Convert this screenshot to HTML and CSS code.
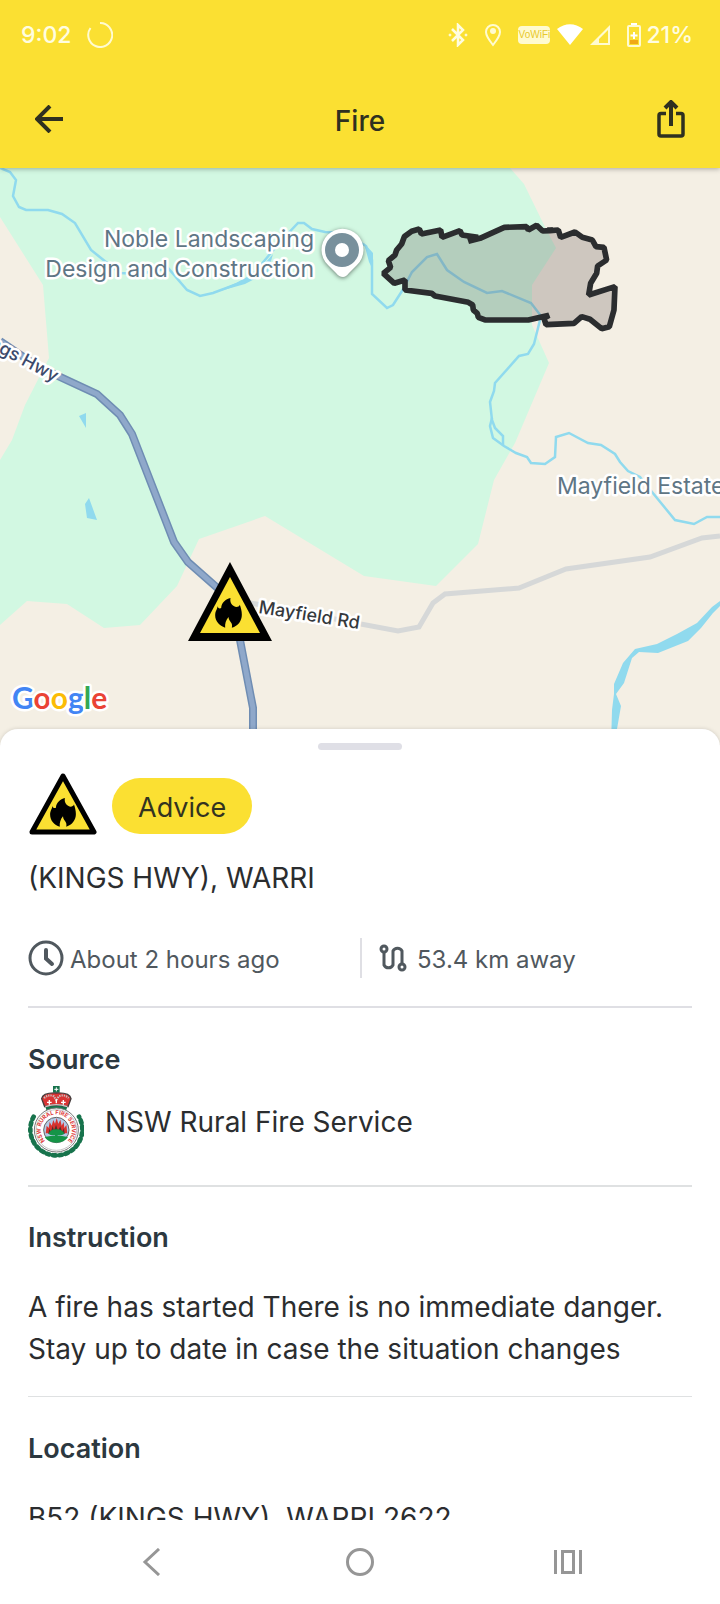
FILE: index.html
```html
<!DOCTYPE html>
<html lang="en">

<head>
    <meta charset="UTF-8">
    <meta name="viewport" content="width=device-width, initial-scale=1.0">
    <title>Fire</title>
    <link rel="stylesheet" href="styles.css">
</head>

<body>
    <!-- shared shapes -->
    <svg class="defs" width="0" height="0" aria-hidden="true">
        <symbol id="flame" viewBox="0 0 80 90">
            <path d="M46 0C31 4 19 14 18 30C13 33 8 30 7 24C7 34 0 38 0 52C0 70 13 84 30 89C29 78 32 66 40 57C40 66 46 70 49 76C51 80 51 85 50 89C69 84 80 68 80 50C80 39 77 28 74 20C72 26 64 29 57 25C47 20 44 9 46 0Z"/>
        </symbol>
    </svg>

    <div class="screen">
        <header class="header">
            <div class="status-bar">
                <div class="status-left">
                    <span>9:02</span>
                    <svg width="26" height="26" viewBox="0 0 26 26" fill="none" stroke="#fffbd0" stroke-width="2">
                        <path d="M13 1a12 12 0 1 1-9.500 5"/>
                    </svg>
                </div>
                <div class="status-right">
                    <svg width="20" height="24" viewBox="0 0 20 24" fill="none" stroke="#fffde0" stroke-width="2.500">
                        <path d="M4 6L15 17L10 22V2L15 7L4 18"/>
                        <circle cx="2" cy="12" r="1" fill="#fffbd0" stroke-width="1"/>
                        <circle cx="18" cy="12" r="1" fill="#fffbd0" stroke-width="1"/>
                    </svg>
                    <svg width="16" height="24" viewBox="0 0 16 24" fill="none" stroke="#fffbd0" stroke-width="2">
                        <path d="M8 22C4 17 1 13 1 9a7 7 0 0 1 14 0c0 4-3 8-7 13Z"/>
                        <circle cx="8" cy="8" r="3" fill="#fffbd0" stroke="none"/>
                    </svg>
                    <div class="signals">
                        <span class="vowifi">VoWiFi</span>
                        <svg width="26" height="22" viewBox="0 0 26 22"><path fill="#fff" d="M0 5C8-1.500 18-1.500 26 5L13 21Z"/></svg>
                        <svg width="20" height="22" viewBox="0 0 20 22"><path fill="#fffbd0" fill-rule="evenodd" d="M20 1V21H0ZM18 6L9 15V19H18Z"/></svg>
                    </div>
                    <div class="battery">
                        <svg width="14" height="24" viewBox="0 0 14 24">
                            <path fill="#fff" d="M4 0h6v2H4z"/>
                            <rect x="1" y="3" width="12" height="20" rx="1" fill="none" stroke="#fffbd0" stroke-width="2"/>
                            <path d="M7 9v7M3.500 12.500h7" stroke="#fff" stroke-width="2"/>
                            <path fill="#f0a818" d="M3 17h8v4H3z"/>
                        </svg>
                        <span>21%</span>
                    </div>
                </div>
            </div>
            <div class="app-bar">
                <button class="icon-btn" type="button" aria-label="Back">
                    <svg width="28" height="28" viewBox="0 0 28 28" fill="none" stroke="#2f3020" stroke-width="4">
                        <path d="M28 14H3M15 1L2 14L15 27"/>
                    </svg>
                </button>
                <h1>Fire</h1>
                <button class="icon-btn" type="button" aria-label="Share">
                    <svg width="28" height="38" viewBox="0 0 28 38" fill="none" stroke="#2f3020" stroke-width="3.500">
                        <path d="M9 13.500H4Q2 13.500 2 15.500V34Q2 36 4 36H24Q26 36 26 34V15.500Q26 13.500 24 13.500H19"/>
                        <path d="M14 26V2M8 8L14 2L20 8" stroke-width="4"/>
                    </svg>
                </button>
            </div>
        </header>

        <main class="content">
            <div class="map">
                <svg class="map-canvas" viewBox="0 168 720 577" preserveAspectRatio="xMidYMin slice">
                    <path class="forest" d="M0 168H510L524 184L545 227L556 248L532 285V325L549 363L515 443L494 480L478 544L436 586L364 576L265 516L199 539L177 586L140 625L104 628L67 604L27 601L0 625V460L12 440L25 405L49 358L43 285L0 217Z"/>

                    <!-- creeks and dams -->
                    <g class="creek">
                        <path d="M0 168L10 172L16 180L13 196L19 207L26 210H48L62 214L75 223L91 250L106 262L120 273L140 274L168 268L187 290L200 296L213 293L248 280L265 260L280 242L298 223H304L312 229L325 232L345 233L366 246L372 260V294L387 308L393 305L402 291L412 272L427 257L437 254L447 270L464 282L487 293L502 291L531 303L541 316L534 344L528 354L519 356L495 383L494 391L490 402L492 420L495 428L503 436V445"/>
                        <path d="M492 418L490 426L493 438L504 446L516 453L527 457L531 463L545 464L555 457L556 437L569 433L588 443L601 445L615 454L620 462L628 471L640 477L652 492L675 520L694 524L707 517H720"/>
                    </g>
                    <path class="water" d="M213 293L236 283L258 271L273 254L268 272L245 284ZM364 243L373 253V270L369 262ZM79 416L86 413V428ZM85 504L89 498L93 509L97 520L87 518Z"/>
                    <path class="water" d="M720 601L712 607L697 623L677 634L657 644L635 649L623 663L614 684V694L612 710L611 745H617V729L621 706L616 694L624 683L632 658L639 652L658 653L688 641L701 628L713 613L720 606Z"/>

                    <!-- roads -->
                    <path class="road" d="M245 602L300 612L350 622L398 631L419 627L433 603L445 594L519 588L566 569L650 557L702 538L720 536"/>
                    <path class="highway-edge" d="M0 341L28 360L60 377L97 394L120 415L132 434L174 542L188 562L222 592L240 640L253 708V745"/>
                    <path class="highway" d="M0 341L28 360L60 377L97 394L120 415L132 434L174 542L188 562L222 592L240 640L253 708V745"/>

                    <!-- burnt area, drawn at three times map scale -->
                    <path class="burn-area" transform="translate(350 160) scale(0.3333)" d="M163 230L185 214L208 207L214 222L272 210L276 232L330 212L336 225L384 232L355 244L390 235L463 202L530 200L535 210L560 196L578 213L600 212V202V212L625 210L632 232L675 216L697 232L727 240L738 260L762 262L770 300L743 318L740 340L722 370L716 405L795 380L792 450L778 500L755 506L720 478L695 470L672 490L588 494L582 475L597 466L535 480H405L385 472L382 460L370 450L368 435L355 427L255 408L245 400L165 390V360L133 370L100 340L122 322L115 302L135 285L140 270L155 252Z"/>

                    <!-- labels -->
                    <g class="place" text-anchor="end">
                        <text x="314" y="247">Noble Landscaping</text>
                        <text x="314" y="277">Design and Construction</text>
                    </g>
                    <text class="place" x="557" y="494">Mayfield Estate</text>
                    <text class="road-name highway-name" transform="translate(-27 339) rotate(28)">Kings Hwy</text>
                    <text class="road-name" transform="translate(258 613) rotate(9)">Mayfield Rd</text>

                    <!-- place pin -->
                    <path class="pin" d="M343 277Q339 277 336 273L328 265A21 21 0 1 1 357 265L349 273Q346 277 343 277Z"/>
                    <circle cx="342" cy="250" r="17" fill="#78909c"/>
                    <circle cx="342" cy="250" r="7" fill="#fff"/>

                    <!-- fire marker -->
                    <path d="M230 562L272 641H188Z"/>
                    <path d="M230 577L260 633H200Z" fill="#fbe032"/>
                    <use href="#flame" x="215" y="598" width="27" height="30"/>

                    <text class="logo" x="12" y="709"><tspan fill="#4285f4">G</tspan><tspan fill="#ea4335">o</tspan><tspan fill="#fbbc05">o</tspan><tspan fill="#4285f4">g</tspan><tspan fill="#34a853">l</tspan><tspan fill="#ea4335">e</tspan></text>
                </svg>
            </div>

            <div class="sheet">
                <div class="handle"></div>

                <div class="warning">
                    <svg width="70" height="64" viewBox="0 0 70 64">
                        <path d="M35 4L66 60H4Z" fill="#fbe032" stroke="#000" stroke-width="5" stroke-linejoin="round"/>
                        <use href="#flame" x="22" y="26" width="26" height="29"/>
                    </svg>
                    <span class="badge">Advice</span>
                </div>
                <h2 class="title">(KINGS HWY), WARRI</h2>

                <div class="meta">
                    <div class="meta-item">
                        <svg width="36" height="36" viewBox="0 0 36 36" fill="none" stroke="#50585e" stroke-width="3">
                            <circle cx="18" cy="18" r="16"/>
                            <path d="M18 10V18.500L24 24" stroke-width="4" stroke-linecap="round"/>
                        </svg>
                        <span>About 2 hours ago</span>
                    </div>
                    <div class="meta-item distance">
                        <svg width="28" height="28" viewBox="0 0 28 28" fill="none" stroke="#50585e" stroke-width="3">
                            <path d="M5 8V21a5 5 0 0 0 9 0V7a5 5 0 0 1 9 0V20"/>
                            <circle cx="5" cy="5" r="3"/>
                            <circle cx="23" cy="23" r="3"/>
                        </svg>
                        <span>53.4 km away</span>
                    </div>
                </div>

                <section class="source">
                    <h3>Source</h3>
                    <div class="source-row">
                        <svg width="56" height="72" viewBox="0 0 168 216">
                            <defs>
                                <path id="ring" d="M85 179A47 47 0 0 1 85 85A47 47 0 0 1 85 179"/>
                            </defs>
                            <!-- wreath -->
                            <g fill="none" stroke="#17734c">
                                <path d="M17 92A78 78 0 1 0 153 92" stroke-width="4"/>
                                <path d="M17 92A78 78 0 1 0 153 92" stroke-width="14" stroke-linecap="round" stroke-dasharray="8 11"/>
                                <path d="M54 68Q85 58 116 68" stroke-width="11"/>
                            </g>
                            <!-- crown -->
                            <path d="M75 0h20v20H75z" fill="#17734c"/>
                            <path d="M85 4v12M79 10h12" stroke="#fff" stroke-width="3"/>
                            <path d="M50 62L41 38C43 26 60 20 85 21C110 20 127 26 129 38L120 62Q85 52 50 62Z" fill="#d93535" stroke="#433c3c" stroke-width="4"/>
                            <path d="M48 36Q62 24 78 31L85 44L92 31Q108 24 122 36" fill="none" stroke="#c9c4c2" stroke-width="6" stroke-dasharray="4 3"/>
                            <path d="M64 42v14M57 49h14M106 42v14M99 49h14M85 40v12" stroke="#fff" stroke-width="4"/>
                            <path d="M52 62Q85 50 118 62" fill="none" stroke="#d0c8c8" stroke-width="4"/>
                            <circle cx="85" cy="132" r="66" fill="#fff" stroke="#777" stroke-width="3"/>
                            <circle cx="85" cy="132" r="61" fill="none" stroke="#aaa" stroke-width="2"/>
                            <text class="crest-text" text-anchor="middle"><textPath href="#ring" startOffset="50%">NSW RURAL FIRE SERVICE</textPath></text>
                            <circle cx="85" cy="132" r="38" fill="#b4c9e6" stroke="#666" stroke-width="3"/>
                            <path d="M53 142L56 119L62 126L65 108L71 119L76 102L81 113L86 96L91 113L97 101L101 119L107 108L109 126L115 117L118 142Z" fill="#d8332f"/>
                            <path d="M61 144L64 128L69 137L74 120L78 134L84 116L90 134L97 121L102 137L108 127L110 144Z" fill="#52302b"/>
                            <path d="M50 153Q85 144 120 153Q110 170 85 170Q60 170 50 153Z" fill="#159447"/>
                            <path d="M62 144Q65 130 85 130Q105 130 109 144Q99 150 89 147V160H81V147Q70 150 62 144Z" fill="#159447"/>
                        </svg>
                        <span>NSW Rural Fire Service</span>
                    </div>
                </section>

                <section class="instruction">
                    <h3>Instruction</h3>
                    <p>A fire has started There is no immediate danger.<br>Stay up to date in case the situation changes</p>
                </section>

                <section class="location">
                    <h3>Location</h3>
                    <p>B52 (KINGS HWY), WARRI 2622</p>
                </section>
            </div>
        </main>

        <nav class="nav-bar">
            <button type="button" aria-label="Back">
                <svg width="28" height="28" viewBox="0 0 28 28"><path d="M21 1L7 14L21 27"/></svg>
            </button>
            <button type="button" aria-label="Home">
                <svg width="28" height="28" viewBox="0 0 28 28"><circle cx="14" cy="14" r="12.500"/></svg>
            </button>
            <button type="button" aria-label="Recent apps">
                <svg width="28" height="28" viewBox="0 0 28 28"><path d="M1.500 2V26M26.500 2V26M8.500 3.500H19.500V24.500H8.500Z"/></svg>
            </button>
        </nav>
    </div>
</body>

</html>
```

FILE: styles.css
```css
* {
    margin: 0;
    padding: 0;
    box-sizing: border-box;
}

body {
    font-family: Inter, "Liberation Sans", sans-serif;
    color: #2b2d2f;
    background-color: #fff;
}

svg {
    display: block;
    flex-shrink: 0;
}

button {
    border: none;
    background: none;
    cursor: pointer;
}

.defs {
    position: absolute;
}

.screen {
    display: flex;
    flex-direction: column;
    height: 100vh;
    overflow: hidden;
}

/* header */
.header {
    position: relative;
    z-index: 1;
    background-color: #fbe032;
    box-shadow: 0 1px 5px rgba(0, 0, 0, 0.3);
}

.status-bar {
    display: flex;
    justify-content: space-between;
    align-items: center;
    height: 70px;
    padding: 0 27px 0 21px;
    color: #fffde0;
    font-size: 23px;
    font-weight: 500;
}

.status-left,
.status-right,
.signals,
.battery {
    display: flex;
    align-items: center;
}

.status-left {
    gap: 16px;
}

.status-right {
    gap: 17px;
}

.signals {
    gap: 7px;
}

.battery {
    gap: 5px;
}

.vowifi {
    width: 32px;
    border-radius: 4px;
    background-color: #fffbd0;
    color: #e8c92c;
    font-family: "Liberation Sans", sans-serif;
    font-size: 10px;
    line-height: 18px;
    text-align: center;
}

.app-bar {
    display: flex;
    justify-content: space-between;
    align-items: center;
    height: 98px;
    padding: 0 30px;
}

.app-bar h1 {
    padding-top: 4px;
    font-size: 28px;
    font-weight: 500;
    color: #2f3020;
}

.icon-btn {
    display: flex;
    justify-content: center;
    width: 38px;
}

/* map */
.content {
    flex: 1;
    min-height: 0;
    overflow: hidden;
}

.map {
    height: 577px;
    background-color: #f4efe4;
}

.map-canvas {
    width: 100%;
    height: 100%;
}

.forest {
    fill: #d2f8e2;
}

.creek {
    fill: none;
    stroke: #90daee;
    stroke-width: 2.5;
}

.water {
    fill: #90daee;
}

.road {
    fill: none;
    stroke: #d6d8d8;
    stroke-width: 5;
}

.highway-edge {
    fill: none;
    stroke: #6f8db3;
    stroke-width: 8;
}

.highway {
    fill: none;
    stroke: #8fa8ca;
    stroke-width: 5;
}

.burn-area {
    fill: rgba(90, 80, 80, 0.25);
    stroke: #2b2d2f;
    stroke-width: 17;
    stroke-linejoin: bevel;
}

.place,
.road-name,
.logo {
    paint-order: stroke;
    stroke: #fff;
    stroke-width: 5;
    stroke-linejoin: round;
}

.place {
    fill: #5f7685;
    font-size: 23px;
    font-weight: 400;
}

.road-name {
    fill: #35393d;
    font-size: 18px;
    font-weight: 500;
}

.highway-name {
    fill: #3c4a6b;
}

.pin {
    fill: #fff;
    filter: drop-shadow(0 1px 2px rgba(0, 0, 0, 0.5));
}

.logo {
    font-family: Lato, sans-serif;
    font-size: 30px;
    font-weight: 700;
}

/* bottom sheet */
.sheet {
    position: relative;
    margin-top: -16px;
    padding: 14px 28px 0;
    border-radius: 18px 18px 0 0;
    background-color: #fff;
    box-shadow: 0 0 4px rgba(0, 0, 0, 0.15);
}

.handle {
    width: 84px;
    height: 7px;
    margin: 0 auto;
    border-radius: 4px;
    background-color: #dfdfe6;
}

.warning {
    display: flex;
    align-items: flex-end;
    gap: 14px;
    margin-top: 22px;
}

.badge {
    margin-bottom: 2px;
    padding: 4px 26px 0;
    border-radius: 28px;
    background-color: #fbe032;
    color: #333320;
    font-size: 27px;
    line-height: 52px;
}

.title {
    margin-top: 22px;
    font-size: 28px;
    font-weight: 400;
    line-height: 40px;
}

.meta {
    display: flex;
    margin-top: 40px;
    padding-bottom: 28px;
    border-bottom: 2px solid #dfdfe4;
}

.meta-item {
    display: flex;
    align-items: center;
    gap: 6px;
    width: 50%;
    height: 40px;
    color: #50585e;
    font-size: 24px;
}

.meta-item span {
    padding-top: 3px;
}

.distance {
    gap: 10px;
    padding-left: 17px;
    border-left: 2px solid #dfdfe4;
}

h3 {
    color: #2c3840;
    font-size: 27px;
    font-weight: 600;
    line-height: 36px;
}

.source {
    padding: 34px 0 27px;
    border-bottom: 2px solid #dfe1e2;
}

.source-row {
    display: flex;
    align-items: center;
    gap: 21px;
    margin-top: 8px;
    font-size: 28px;
}

.crest-text {
    fill: #e0403c;
    font-size: 17px;
    font-weight: 700;
}

.instruction {
    padding: 33px 0 26px;
    border-bottom: 1px solid #dfe1e2;
}

.instruction p,
.location p {
    margin-top: 30px;
    font-size: 28px;
    line-height: 42px;
}

.location {
    padding: 34px 0 28px;
}

/* system navigation */
.nav-bar {
    display: flex;
    height: 84px;
    padding: 0 48px;
    background-color: #fff;
}

.nav-bar button {
    display: flex;
    flex: 1;
    justify-content: center;
    align-items: center;
}

.nav-bar svg {
    fill: none;
    stroke: #969696;
    stroke-width: 3;
}
```
